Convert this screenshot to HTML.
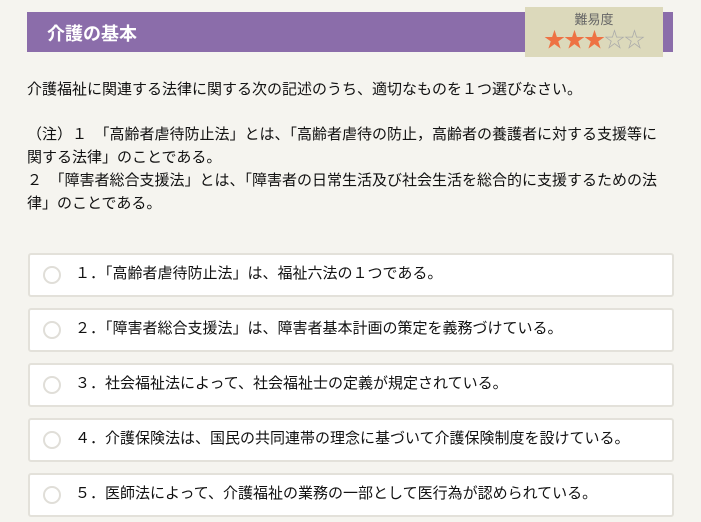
<!DOCTYPE html>
<html><head><meta charset="utf-8"><style>
body{margin:0;background:#f5f4ef;font-family:"Liberation Sans","Noto Sans CJK JP",sans-serif;color:#111;width:701px;height:522px;overflow:hidden;position:relative}
.bar{position:absolute;left:27px;top:12px;width:646px;height:40px;background:#8b6daa}
.bar span{position:absolute;left:20px;top:8px;color:#fff;font-size:18px;font-weight:bold}
.badge{position:absolute;left:525px;top:7px;width:138px;height:50px;background:#dcd9bb;text-align:center}
.badge .t{font-size:13px;color:#666;margin-top:4px;line-height:18px}
.badge .s{font-size:21px;line-height:24px;letter-spacing:-1px}
.on{color:#ee7244}.off{color:#aaa}
.txt{position:absolute;left:27px;font-size:15px;line-height:23px;width:680px;white-space:nowrap}
.opt{position:absolute;left:28px;width:642px;height:40px;background:#fff;border:2px solid #e3e1da;border-radius:3px}
.opt i{position:absolute;left:13px;top:11px;width:14px;height:14px;border:2px solid #e0ded8;border-radius:50%}
.opt span{position:absolute;left:45px;top:9px;font-size:15px;line-height:20px;white-space:nowrap}
</style></head><body>
<div class="bar"><span>介護の基本</span></div>
<div class="badge"><div class="t">難易度</div><div class="s"><span class="on">★★★</span><span class="off">☆☆</span></div></div>
<div class="txt" style="top:78px">介護福祉に関連する法律に関する次の記述のうち、適切なものを１つ選びなさい。</div>
<div class="txt" style="top:123px">（注）１　「高齢者虐待防止法」とは、「高齢者虐待の防止，高齢者の養護者に対する支援等に<br>関する法律」のことである。<br>２　「障害者総合支援法」とは、「障害者の日常生活及び社会生活を総合的に支援するための法<br>律」のことである。</div>
<div class="opt" style="top:253px"><i></i><span>１．「高齢者虐待防止法」は、福祉六法の１つである。</span></div>
<div class="opt" style="top:308px"><i></i><span>２．「障害者総合支援法」は、障害者基本計画の策定を義務づけている。</span></div>
<div class="opt" style="top:363px"><i></i><span>３．社会福祉法によって、社会福祉士の定義が規定されている。</span></div>
<div class="opt" style="top:418px"><i></i><span>４．介護保険法は、国民の共同連帯の理念に基づいて介護保険制度を設けている。</span></div>
<div class="opt" style="top:473px"><i></i><span>５．医師法によって、介護福祉の業務の一部として医行為が認められている。</span></div>
</body></html>
